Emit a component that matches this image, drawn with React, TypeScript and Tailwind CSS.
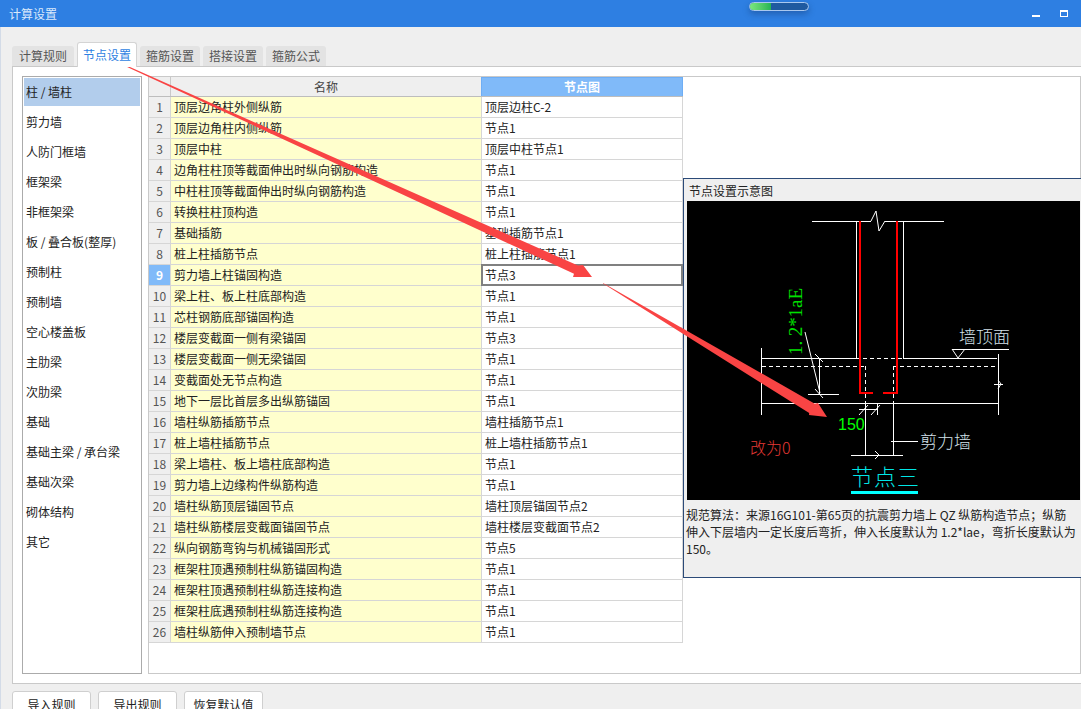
import React from "react";

const FONT = "font-['Noto_Sans_CJK_SC','Liberation_Sans',sans-serif]";

const tabs = ["计算规则", "节点设置", "箍筋设置", "搭接设置", "箍筋公式"];
const side = ["柱 / 墙柱", "剪力墙", "人防门框墙", "框架梁", "非框架梁", "板 / 叠合板(整厚)", "预制柱", "预制墙", "空心楼盖板", "主肋梁", "次肋梁", "基础", "基础主梁 / 承台梁", "基础次梁", "砌体结构", "其它"];
const rows: [string, string][] = [
  ["顶层边角柱外侧纵筋", "顶层边柱C-2"],
  ["顶层边角柱内侧纵筋", "节点1"],
  ["顶层中柱", "顶层中柱节点1"],
  ["边角柱柱顶等截面伸出时纵向钢筋构造", "节点1"],
  ["中柱柱顶等截面伸出时纵向钢筋构造", "节点1"],
  ["转换柱柱顶构造", "节点1"],
  ["基础插筋", "基础插筋节点1"],
  ["桩上柱插筋节点", "桩上柱插筋节点1"],
  ["剪力墙上柱锚固构造", "节点3"],
  ["梁上柱、板上柱底部构造", "节点1"],
  ["芯柱钢筋底部锚固构造", "节点1"],
  ["楼层变截面一侧有梁锚固", "节点3"],
  ["楼层变截面一侧无梁锚固", "节点1"],
  ["变截面处无节点构造", "节点1"],
  ["地下一层比首层多出纵筋锚固", "节点1"],
  ["墙柱纵筋插筋节点", "墙柱插筋节点1"],
  ["桩上墙柱插筋节点", "桩上墙柱插筋节点1"],
  ["梁上墙柱、板上墙柱底部构造", "节点1"],
  ["剪力墙上边缘构件纵筋构造", "节点1"],
  ["墙柱纵筋顶层锚固节点", "墙柱顶层锚固节点2"],
  ["墙柱纵筋楼层变截面锚固节点", "墙柱楼层变截面节点2"],
  ["纵向钢筋弯钩与机械锚固形式", "节点5"],
  ["框架柱顶遇预制柱纵筋锚固构造", "节点1"],
  ["框架柱顶遇预制柱纵筋连接构造", "节点1"],
  ["框架柱底遇预制柱纵筋连接构造", "节点1"],
  ["墙柱纵筋伸入预制墙节点", "节点1"],
];

function Drawing() {
  const cjk = "'Noto Sans CJK SC','Liberation Serif',serif";
  return (
    <svg width="393" height="299" viewBox="687 201 393 299" className="block" shapeRendering="crispEdges">
      <rect x="687" y="201" width="393" height="299" fill="#000" />
      <g stroke="#fff" strokeWidth="1" fill="none">
        <path d="M812 221.5H871M885 221.5H944" />
        <path d="M871 221L876 211L879 231L885 221" shapeRendering="auto" />
        <path d="M856.5 221V358M903.5 221V358" />
        <path d="M761 358.5H856M903 358.5H997" />
        <path d="M856 358.5H903" strokeDasharray="4 3" />
        <path d="M762 366.5H865M893 366.5H998" strokeDasharray="4 3" />
        <path d="M865.5 366V403M893.5 366V403" strokeDasharray="4 3" />
        <path d="M761 403.5H998" />
        <path d="M761.5 348V415M998.5 354V415" />
        <path d="M865.5 403V455M893.5 403V455" />
        <path d="M851 455.5H903" />
        <path d="M875 451L879 455L875 459" shapeRendering="auto" />
        <path d="M952 349.5H1009" />
        <path d="M952 349L958 358L965 349" shapeRendering="auto" />
        <path d="M805 332L820 393" shapeRendering="auto" />
        <path d="M819.5 358V394" />
        <path d="M808 394.5H839" />
        <path d="M815 354L823 362M815 389L823 398" shapeRendering="auto" />
        <path d="M859 409.5H878" />
        <path d="M877.5 403V415" />
        <path d="M859 415L868 405M871 415L880 405" shapeRendering="auto" />
        <path d="M891 441.5H918" />
        <path d="M994 384.5H1003" />
        <path d="M998 380L1001 384L998 389" shapeRendering="auto" />
      </g>
      <g stroke="#ff0000" strokeWidth="2" fill="none">
        <path d="M860 221V393H873M883 393H897V221" />
      </g>
      <rect x="851" y="491" width="67" height="3" fill="#00ffff" />
      <g shapeRendering="auto" fontFamily={cjk}>
        <text x="959" y="343" fontSize="17" fontWeight="300" fill="#d4e2ea">墙顶面</text>
        <text x="920" y="448" fontSize="17" fontWeight="300" fill="#d4e2ea">剪力墙</text>
        <text x="851" y="485" fontSize="22" fontWeight="300" fill="#00e6e6" letterSpacing="1">节点三</text>
        <text x="750" y="454" fontSize="16" fontWeight="300" fill="#e53935">改为0</text>
        <text x="838" y="430" fontSize="16" fill="#00ff00" fontFamily="'Liberation Sans',sans-serif">150</text>
        <text transform="translate(802 355) rotate(-90)" fontSize="19" fill="#00e000" fontFamily="'Liberation Serif',serif" textLength="67" lengthAdjust="spacing">1. 2*1aE</text>
      </g>
    </svg>
  );
}

export default function App() {
  return (
    <div className={`${FONT} relative h-[709px] w-[1081px] overflow-hidden bg-[#efefef] text-[12px] leading-[16px] text-[#222] shadow-[inset_1px_0_0_#d3dbe7]`}>
      <div className="flex h-[27px] items-center bg-[#2e7fe2] pl-[9px] text-[#dbe9fb]">计算设置</div>

      <div className="flex h-[39px] items-end gap-[3px] pl-[12px]">
        {tabs.map((t, i) =>
          i === 1 ? (
            <div key={t} className="relative z-10 -mb-px flex h-[25px] w-[60px] items-center justify-center rounded-t-[3px] border border-b-0 border-[#d4d4d4] bg-white text-[#2e7fe2]">{t}</div>
          ) : (
            <div key={t} className={`flex h-[20px] items-center justify-center rounded-t-[3px] bg-[#e3e3e3] text-[#555] ${i === 0 ? "w-[62px]" : "w-[60px]"}`}>{t}</div>
          )
        )}
      </div>

      <div className="ml-[12px] flex h-[618px] gap-[6px] border-y border-l border-[#c9c9c9] bg-white px-[9px] pt-[9px] pb-[9px] pr-0">
        <div className="h-[598px] w-[120px] shrink-0 border border-[#ababab] px-px">
          {side.map((s, i) => (
            <div key={s} className="h-[30px] py-px">
              <div className={`flex h-[28px] items-center pl-[2px] ${i === 0 ? "bg-[#b2cdec]" : ""}`}>{s}</div>
            </div>
          ))}
        </div>
        <div className="h-[598px] flex-1 border border-[#c9c9c9]">
          <div className="grid h-[20px] w-[534px] grid-cols-[22px_310px_202px] border-b border-[#bdbdbd]">
            <div className="border-r border-[#c9c9c9] bg-[#efefef]" />
            <div className="flex items-center justify-center bg-[#efefef] text-[#444]">名称</div>
            <div className="flex items-center justify-center border border-b-0 border-[#6eaef5] bg-[#80baf9] font-bold text-white">节点图</div>
          </div>
          {rows.map(([a, b], i) => (
            <div key={i} className="grid h-[21px] w-[534px] grid-cols-[22px_310px_202px]">
              <div className={`flex items-center justify-center border-r border-b border-[#d6d6d6] ${i === 8 ? "bg-[#80baf9] font-bold text-white" : "bg-[#efefef] text-[#555]"}`}>{i + 1}</div>
              <div className="flex items-center border-b border-[#d6d6d6] bg-[#ffffcd] pl-[3px]">{a}</div>
              {i === 8 ? (
                <div className="-mt-px flex h-[22px] items-center border-2 border-[#808080] bg-white pl-[2px]">{b}</div>
              ) : (
                <div className="flex items-center border-r border-b border-l border-[#d6d6d6] bg-white pl-[3px]">{b}</div>
              )}
            </div>
          ))}
        </div>
      </div>

      <div className="flex gap-[7px] pt-[7px] pl-[12px]">
        {["导入规则", "导出规则", "恢复默认值"].map((t) => (
          <div key={t} className="flex h-[26px] w-[79px] items-center justify-center rounded-t-[3px] border border-[#cfcfcf] bg-white pt-[1px]">{t}</div>
        ))}
      </div>

      {/* floating preview window */}
      <div className="absolute top-[178px] left-[683px] h-[400px] w-[400px] border border-[#2b4a78] bg-[#efefef]">
        <div className="flex h-[22px] items-center pt-[1px] pl-[5px]">节点设置示意图</div>
        <div className="pl-[3px]"><Drawing /></div>
        <div className="pt-[6px] pl-[2px] leading-[17px] whitespace-nowrap">
          <div>规范算法：来源16G101-第65页的抗震剪力墙上 QZ 纵筋构造节点；纵筋</div>
          <div>伸入下层墙内一定长度后弯折，伸入长度默认为 1.2*lae，弯折长度默认为</div>
          <div>150。</div>
        </div>
      </div>

      {/* progress widget */}
      <div className="absolute top-[2px] left-[749px] h-[9px] w-[60px] overflow-hidden rounded-full border border-[#a9c8ef] bg-[#1f5aa0] shadow-[0_3px_6px_rgba(20,60,120,0.45)]">
        <div className="h-full w-[21px] bg-gradient-to-r from-[#7be87f] to-[#22b455]" />
      </div>

      {/* window controls */}
      <div className="absolute top-[15px] left-[1032px] h-[2px] w-[8px] bg-white" />
      <div className="absolute top-[10px] left-[1060px] h-[7px] w-[8px] border border-t-2 border-white" />

      {/* annotation arrows */}
      <svg className="pointer-events-none absolute top-0 left-0" width="1081" height="709">
        <polygon points="113,59.6 578,265.6 583,265 592,277 573,277 574,273.8 113,60.4" fill="#f94444" />
        <polygon points="603,283 814.8,403.7 818,403 827,417 809,415 809.2,413.1 603,283.4" fill="#f94444" />
      </svg>
    </div>
  );
}
